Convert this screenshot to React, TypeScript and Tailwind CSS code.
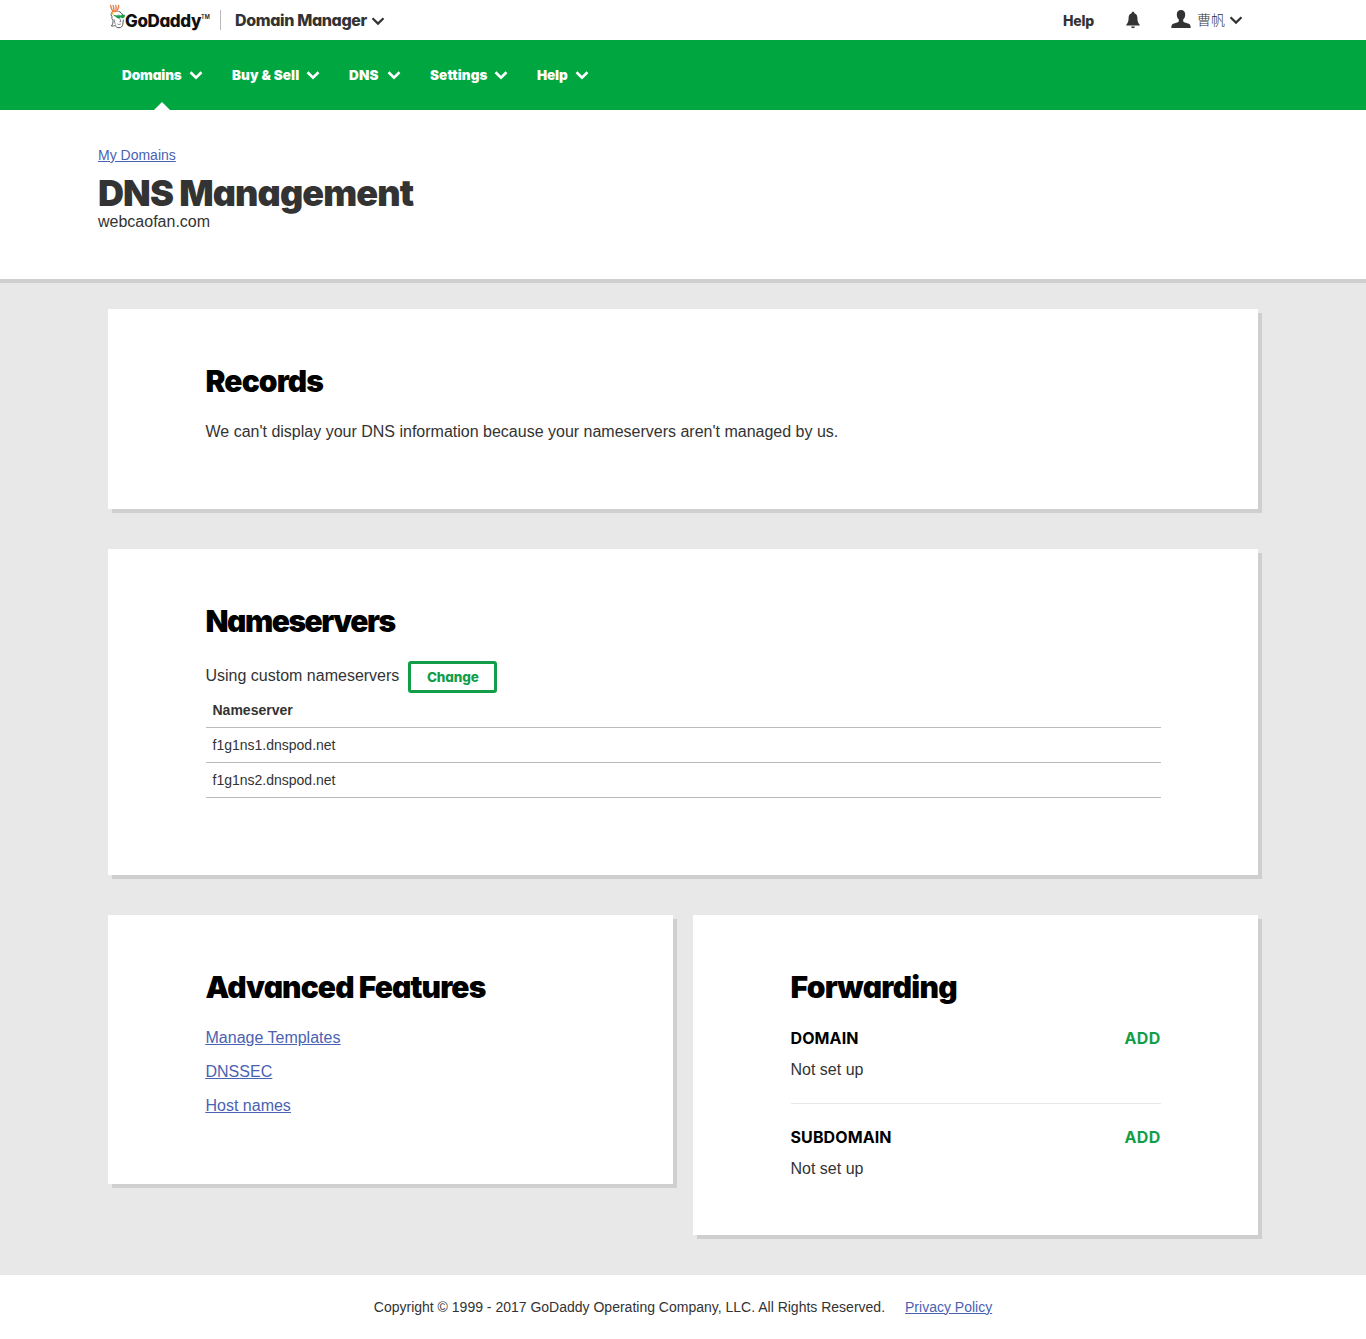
import type { ReactNode } from "react";

function Chevron({ className = "" }: { className?: string }) {
  return (
    <svg viewBox="0 0 14 10" className={`h-[10px] w-[14px] shrink-0 ${className}`} fill="none" stroke="currentColor">
      <path d="M1.500 2.200 L7 7.600 L12.500 2.200" />
    </svg>
  );
}

function Mascot() {
  return (
    <svg viewBox="0 0 17 27" className="h-[27px] w-[17px] shrink-0" fill="none">
      <path
        d="M1.800 1c-.9 1 .9 1.500.3 2.700L3.600 7M4.400 1c-.9 1 .8 1.600.2 2.900l.5 3M7 1c-.9 1 .6 1.600.1 2.800L6.800 6.800M9.900 1c-.9 1 .3 1.600-.5 2.700L8.300 6.600"
        stroke="#e9824f"
        strokeWidth="1.400"
      />
      <path d="M2.800 6.400h6.400l-.3 1.300-5.700.7z" fill="#ee7b3d" />
      <path
        d="M3 8C1.600 9.800 2 12 3.400 13c-1 .6-.8 2.400.6 2.600.2 2.800-.2 4.900-1.600 6.400 2 .3 3-.2 3.800-.7.6 1.700 2 2.400 3.800 2.400 2.200 0 3.600-1.200 3.800-3.400l.6-4.600M9.400 7.400c2 .4 3.700 1.900 4.300 4"
        stroke="#444"
        strokeWidth="0.900"
      />
      <path d="M10.800 14.400l1.100 3.200-1.500.2M8.400 20c1.300.7 2.500.6 3.500-.2M5.600 15.500c-.3 1.800.1 3.600 1 5" stroke="#555" strokeWidth="0.700" />
      <circle cx="3.300" cy="9.600" r="1.100" fill="#e9c52b" />
      <path d="M4.600 11.300l3.200.4c1-.7 2.600-.8 3.600 0 1-.7 2.800-.9 4.300-.6l-.4 2c-1 1.200-2.800 1.100-3.700-.2-.7 1.600-3.300 1.800-4.100.1z" fill="#12a550" stroke="#0b7c3b" strokeWidth="0.500" />
    </svg>
  );
}

function NavItem({ label, width, tracking, active }: { label: string; width: string; tracking: string; active?: boolean }) {
  return (
    <a className={`relative flex h-[70px] items-center justify-between ${width}`}>
      <span className={`mt-px text-[13.500px] font-black whitespace-nowrap ${tracking}`}>{label}</span>
      <Chevron className="stroke-[2.6]" />
      {active && (
        <svg viewBox="0 0 16 8" className="absolute bottom-0 left-[32px] h-2 w-4" fill="#fff">
          <path d="M0 8 L8 0 L16 8z" />
        </svg>
      )}
    </a>
  );
}

function Card({ title, className, tracking, children }: { title: string; className: string; tracking: string; children: ReactNode }) {
  return (
    <section className={`bg-white px-[97.5px] pt-[54px] shadow-[4px_4px_0_#cfcfcf] ${className}`}>
      <h2 className={`font-[Inter] text-[30px] leading-[36px] font-black whitespace-nowrap text-black [font-feature-settings:'cv11'] ${tracking}`}>
        {title}
      </h2>
      {children}
    </section>
  );
}

function Forward({ name, className = "" }: { name: string; className?: string }) {
  return (
    <div className={className}>
      <div className="flex justify-between font-[Inter] text-[16px] leading-6 font-bold">
        <h3 className="tracking-[0.1px] text-black">{name}</h3>
        <a className="tracking-[0.3px] text-[#129e49]">ADD</a>
      </div>
      <p className="mt-[8px] text-[16px] leading-6">Not set up</p>
    </div>
  );
}

export default function App() {
  return (
    <div className="flex h-[1339px] w-[1366px] flex-col bg-white font-['Liberation_Sans',sans-serif] text-[#333]">
      <header className="flex h-10 items-center pl-[109px] font-[Inter] [font-feature-settings:'cv11']">
        <div className="flex h-10 w-[111px] items-start pt-[4px]">
          <Mascot />
          <span className="-ml-px mt-[5px] text-[17px] leading-6 font-extrabold tracking-[-0.4px] text-[#111]">GoDaddy</span>
          <span className="mt-[8px] text-[5.500px] leading-[10px] font-semibold text-[#111]">TM</span>
        </div>
        <div className="h-5 w-px bg-[#bbb]" />
        <span className="ml-[14px] w-[136px] text-[16px] font-extrabold tracking-[-0.36px] whitespace-nowrap">Domain Manager</span>
        <Chevron className="mt-px stroke-[2.2]" />
        <span className="ml-[678px] w-[63px] text-[14px] font-extrabold tracking-[-0.2px]">Help</span>
        <svg viewBox="0 0 14 18" className="-mt-px h-[18px] w-[14px]" fill="#333">
          <path d="M7 .8c.9 0 1.400.6 1.400 1.500 2.200.8 3 2.500 3 5 0 3.200.8 4.600 2.400 6.700v.5H.2V14c1.600-2.100 2.400-3.500 2.400-6.700 0-2.500.8-4.200 3-5C5.600 1.400 6.100.8 7 .8zM5 15.500h4c-.2 1.100-1 1.700-2 1.700s-1.800-.6-2-1.700z" />
        </svg>
        <svg viewBox="0 0 20 18" className="-mt-[2px] ml-[31px] h-[18px] w-5" fill="#333">
          <path d="M10 0c2.700 0 4.200 1.800 4.200 4.400 0 2-.7 4-2 5v2c1 1 3.500 1.300 5.600 2.300 1.400.7 1.900 1.700 1.900 4.300H.3c0-2.600.5-3.600 1.900-4.300 2.100-1 4.600-1.300 5.600-2.300v-2c-1.300-1-2-3-2-5C5.800 1.800 7.300 0 10 0z" />
        </svg>
        <span className="-mt-[2px] ml-[6px] w-[32px] font-['Noto_Sans_CJK_SC',sans-serif] text-[14px] leading-5 font-light whitespace-nowrap">曹帆</span>
        <Chevron className="-mt-px stroke-[2.2]" />
      </header>

      <nav className="flex h-[70px] gap-[29px] bg-[#00a63f] pl-[122px] font-[Inter] text-white [font-feature-settings:'cv11']">
        <NavItem label="Domains" width="w-[81px]" tracking="tracking-[-0.1px]" active />
        <NavItem label="Buy & Sell" width="w-[88px]" tracking="tracking-[0.1px]" />
        <NavItem label="DNS" width="w-[52px]" tracking="tracking-[0.2px]" />
        <NavItem label="Settings" width="w-[78px]" tracking="tracking-[0.1px]" />
        <NavItem label="Help" width="w-[52px]" tracking="tracking-[-0.1px]" />
      </nav>

      <div className="h-[173px] border-b-4 border-[#cfcfcf] pt-[35px] pl-[98px]">
        <a className="block text-[14px] leading-5 text-[#4a62b3] underline">My Domains</a>
        <h1 className="mt-[9px] font-[Inter] text-[36px] leading-[38px] font-black tracking-[-0.9px] [font-feature-settings:'cv11']">DNS Management</h1>
        <p className="text-[16px] leading-5">webcaofan.com</p>
      </div>

      <main className="flex h-[992px] flex-col gap-10 bg-[#e8e8e8] px-[108px] pt-[26px]">
        <Card title="Records" tracking="tracking-[-0.9px]" className="h-[200px]">
          <p className="mt-[21px] text-[16px] leading-6">
            We can't display your DNS information because your nameservers aren't managed by us.
          </p>
        </Card>
        <Card title="Nameservers" tracking="tracking-[-1.500px]" className="h-[326px]">
          <div className="mt-[22px] flex h-8 items-start">
            <span className="mt-[3px] text-[16px] leading-6">Using custom nameservers</span>
            <button className="ml-[9px] h-8 w-[89px] rounded-[3px] border-3 border-[#129e49] font-[Inter] text-[13.500px] font-extrabold tracking-[-0.1px] text-[#129e49] [font-feature-settings:'cv11']">
              Change
            </button>
          </div>
          <div className="text-[14px]">
            <div className="flex h-[35px] items-center border-b border-[#bbb] pl-[7px] font-bold">Nameserver</div>
            <div className="flex h-[35px] items-center border-b border-[#bbb] pl-[7px]">f1g1ns1.dnspod.net</div>
            <div className="flex h-[35px] items-center border-b border-[#bbb] pl-[7px]">f1g1ns2.dnspod.net</div>
          </div>
        </Card>
        <div className="flex items-start gap-5">
          <Card title="Advanced Features" tracking="tracking-[-0.9px]" className="h-[269px] w-[565px]">
            <div className="mt-[16px] flex flex-col text-[16px] leading-[34px] text-[#4a62b3] underline">
              <a>Manage Templates</a>
              <a>DNSSEC</a>
              <a>Host names</a>
            </div>
          </Card>
          <Card title="Forwarding" tracking="tracking-[-0.7px]" className="h-[320px] w-[565px]">
            <Forward name="DOMAIN" className="mt-[21px]" />
            <div className="mt-[21px] border-t border-[#e8e8e8] pt-[21px]">
              <Forward name="SUBDOMAIN" />
            </div>
          </Card>
        </div>
      </main>

      <footer className="flex h-16 items-center justify-center gap-5 text-[14px]">
        <span>Copyright © 1999 - 2017 GoDaddy Operating Company, LLC. All Rights Reserved.</span>
        <a className="text-[#4a62b3] underline">Privacy Policy</a>
      </footer>
    </div>
  );
}
